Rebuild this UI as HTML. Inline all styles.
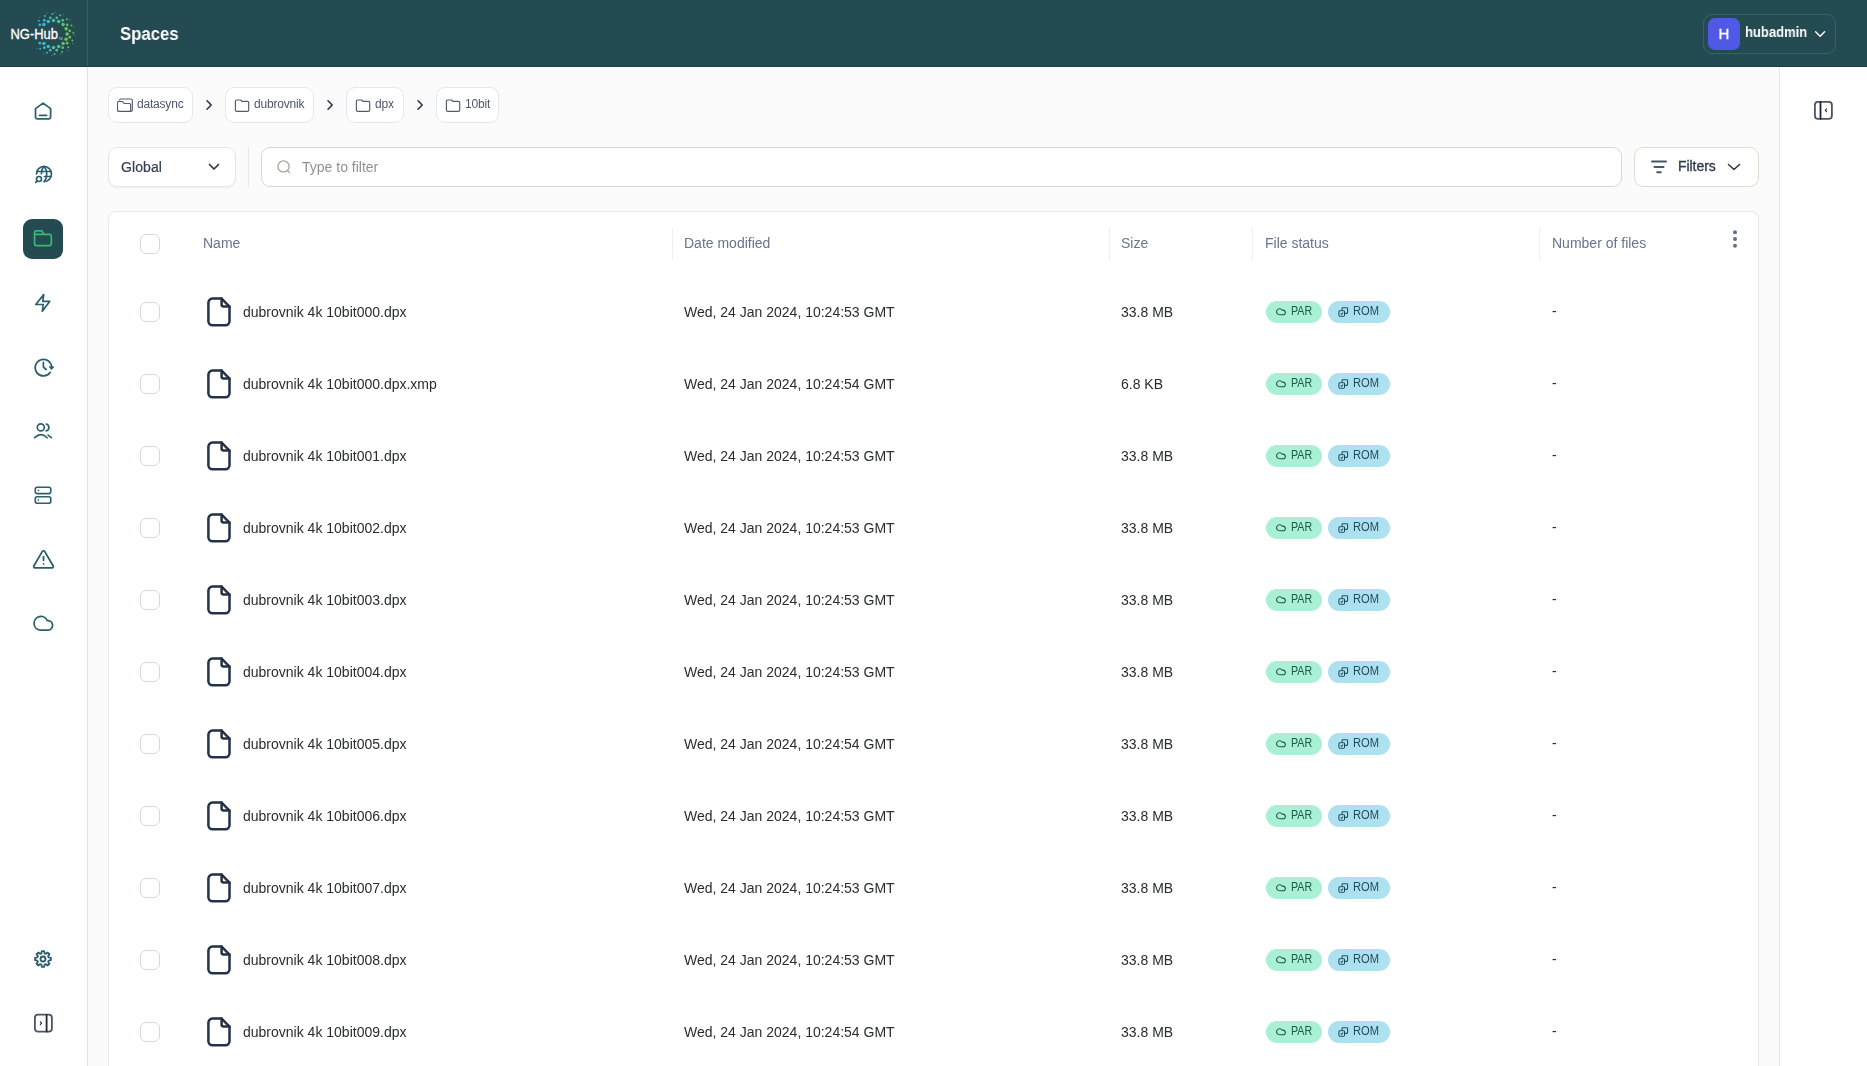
<!DOCTYPE html>
<html><head><meta charset="utf-8">
<style>
*{box-sizing:border-box;margin:0;padding:0}
html,body{width:1867px;height:1066px;overflow:hidden}
.row,.th,.ct,.ph,.ftxt,.sel,.title,.uname,.avatar,.badge{will-change:transform}
body{position:relative;background:#fbfbfc;font-family:"Liberation Sans",sans-serif;color:#1f2328}
.hdr{position:absolute;left:0;top:0;width:1867px;height:67px;background:#244a52;border-bottom:1px solid #1c3e45}
.logo{position:absolute;left:0;top:0;width:87px;height:66px}
.hsep{position:absolute;left:87px;top:0;width:1px;height:66px;background:#2f6270}
.title{position:absolute;left:120px;top:23.6px;font-size:18px;line-height:20px;font-weight:700;color:#fff;transform:scaleX(0.93);transform-origin:0 0}
.chip{position:absolute;left:1703px;top:14px;width:133px;height:40px;border:1px solid #2f6573;border-radius:9px}
.avatar{position:absolute;left:1708px;top:18px;width:32px;height:32px;border-radius:7px;background:#5059e6;color:#fff;font-size:15px;text-align:center;line-height:32px;-webkit-text-stroke:0.3px #fff}
.uname{position:absolute;left:1745px;top:23.6px;font-size:14px;line-height:16px;font-weight:700;color:#fff;transform:scaleX(0.93);transform-origin:0 0}
.side{position:absolute;left:0;top:67px;width:88px;height:999px;background:#fff;border-right:1px solid #e3e1db}
.sbi{position:absolute;left:23px}
.active{position:absolute;left:23px;top:219px;width:40px;height:40px;border-radius:9px;background:#244a52}
.rpanel{position:absolute;left:1779px;top:67px;width:88px;height:999px;background:#fff;border-left:1px solid #e5e7eb}
.crumb{position:absolute;top:87px;height:36px;background:#fff;border:1px solid #e6e8ee;border-radius:9px}
.ct{position:absolute;top:97px;font-size:12px;color:#4d586c;line-height:14px;letter-spacing:-0.2px}
.sel{position:absolute;left:108px;top:147px;width:128px;height:40px;background:#fff;border:1px solid #e5e7eb;border-radius:9px;box-shadow:0 1px 2px rgba(16,24,40,.06)}
.sel .lbl{position:absolute;left:12px;top:10.5px;font-size:14px;color:#354055;line-height:16px;-webkit-text-stroke:0.2px #354055;letter-spacing:0.1px}
.vsep{position:absolute;left:248px;top:147px;width:1px;height:40px;background:#e5e7eb}
.search{position:absolute;left:261px;top:147px;width:1361px;height:40px;background:#fff;border:1px solid #d9d8cc;border-radius:9px}
.ph{position:absolute;left:302px;top:159px;font-size:14px;color:#919191;line-height:16px}
.filters{position:absolute;left:1634px;top:147px;width:125px;height:40px;background:#fff;border:1px solid #dedcd2;border-radius:9px}
.ftxt{position:absolute;left:1678px;top:158px;font-size:14px;color:#2d3748;line-height:16px;letter-spacing:-0.05px;-webkit-text-stroke:0.3px #2d3748}
.card{position:absolute;left:108px;top:211px;width:1651px;height:900px;background:#fff;border:1px solid #e6e8ee;border-radius:8px}
.th{position:absolute;top:235px;font-size:14px;color:#66758c;line-height:16px}
.cdiv{position:absolute;top:228px;width:1px;height:32px;background:#eef0f3}
.cb{position:absolute;width:20px;height:20px;border:1px solid #d3d8e0;border-radius:6px;background:#fff}
.row{position:absolute;left:0;width:1779px;height:72px}
.row .t{position:absolute;top:28px;font-size:14px;line-height:16px;color:#2a2c30;white-space:nowrap}
.badge{position:absolute;top:25px;height:22px;border-radius:11px;font-size:12px;line-height:22px;white-space:nowrap}
.badge svg{position:absolute}
.badge span{position:absolute;top:-1.3px;transform:scaleX(0.89);transform-origin:0 0}
.par{width:56px;background:#aaf0d5;color:#1f5a4a}
.par svg{left:10px;top:5.6px}
.par span{left:24.5px}
.rom{width:62px;background:#aee1f0;color:#1e4d5c}
.rom svg{left:9.6px;top:6px}
.rom span{left:25px;transform:scaleX(0.93)}
</style></head><body>
<div class="hdr"></div>
<svg class="logo" width="87" height="66" viewBox="0 0 87 66">
<circle cx="43.9" cy="24.4" r="1.75" fill="rgb(58, 182, 210)" opacity="1.0"/><circle cx="48.3" cy="21.4" r="1.75" fill="rgb(68, 185, 186)" opacity="1.0"/><circle cx="53.5" cy="20.4" r="1.75" fill="rgb(78, 187, 162)" opacity="1.0"/><circle cx="58.7" cy="21.4" r="1.75" fill="rgb(88, 190, 138)" opacity="1.0"/><circle cx="63.1" cy="24.4" r="1.75" fill="rgb(98, 192, 114)" opacity="1.0"/><circle cx="66.1" cy="28.8" r="1.75" fill="rgb(108, 195, 90)" opacity="1.0"/><circle cx="67.1" cy="34.0" r="1.75" fill="rgb(118, 198, 66)" opacity="1.0"/><circle cx="66.1" cy="39.2" r="1.75" fill="rgb(108, 195, 90)" opacity="1.0"/><circle cx="63.1" cy="43.6" r="1.75" fill="rgb(98, 192, 114)" opacity="1.0"/><circle cx="58.7" cy="46.6" r="1.75" fill="rgb(88, 190, 138)" opacity="1.0"/><circle cx="53.5" cy="47.6" r="1.75" fill="rgb(78, 187, 162)" opacity="1.0"/><circle cx="48.3" cy="46.6" r="1.75" fill="rgb(68, 185, 186)" opacity="1.0"/><circle cx="43.9" cy="43.6" r="1.75" fill="rgb(58, 182, 210)" opacity="1.0"/><circle cx="39.8" cy="24.8" r="1.35" fill="rgb(56, 182, 216)" opacity="1.0"/><circle cx="44.3" cy="20.3" r="1.35" fill="rgb(63, 183, 198)" opacity="1.0"/><circle cx="50.3" cy="17.8" r="1.35" fill="rgb(73, 186, 174)" opacity="1.0"/><circle cx="56.7" cy="17.8" r="1.35" fill="rgb(83, 189, 150)" opacity="1.0"/><circle cx="62.7" cy="20.3" r="1.35" fill="rgb(93, 191, 126)" opacity="1.0"/><circle cx="67.2" cy="24.8" r="1.35" fill="rgb(103, 194, 102)" opacity="1.0"/><circle cx="69.7" cy="30.8" r="1.35" fill="rgb(113, 196, 78)" opacity="1.0"/><circle cx="69.7" cy="37.2" r="1.35" fill="rgb(113, 196, 78)" opacity="1.0"/><circle cx="67.2" cy="43.2" r="1.35" fill="rgb(103, 194, 102)" opacity="1.0"/><circle cx="62.7" cy="47.7" r="1.35" fill="rgb(93, 191, 126)" opacity="1.0"/><circle cx="56.7" cy="50.2" r="1.35" fill="rgb(83, 189, 150)" opacity="1.0"/><circle cx="50.3" cy="50.2" r="1.35" fill="rgb(73, 186, 174)" opacity="1.0"/><circle cx="44.3" cy="47.7" r="1.35" fill="rgb(63, 183, 198)" opacity="1.0"/><circle cx="39.8" cy="43.2" r="1.35" fill="rgb(56, 182, 216)" opacity="1.0"/><circle cx="38.7" cy="20.7" r="1.00" fill="rgb(56, 182, 213)" opacity="0.95"/><circle cx="44.9" cy="16.0" r="1.00" fill="rgb(66, 184, 189)" opacity="0.95"/><circle cx="52.5" cy="14.1" r="1.00" fill="rgb(76, 187, 165)" opacity="0.95"/><circle cx="60.1" cy="15.2" r="1.00" fill="rgb(86, 189, 141)" opacity="0.95"/><circle cx="66.8" cy="19.2" r="1.00" fill="rgb(96, 192, 117)" opacity="0.95"/><circle cx="71.5" cy="25.4" r="1.00" fill="rgb(106, 195, 93)" opacity="0.95"/><circle cx="73.4" cy="33.0" r="1.00" fill="rgb(116, 197, 69)" opacity="0.95"/><circle cx="72.3" cy="40.6" r="1.00" fill="rgb(109, 195, 86)" opacity="0.95"/><circle cx="68.3" cy="47.3" r="1.00" fill="rgb(99, 193, 111)" opacity="0.95"/><circle cx="62.1" cy="52.0" r="1.00" fill="rgb(89, 190, 135)" opacity="0.95"/><circle cx="54.5" cy="53.9" r="1.00" fill="rgb(79, 188, 159)" opacity="0.95"/><circle cx="46.9" cy="52.8" r="1.00" fill="rgb(69, 185, 183)" opacity="0.95"/><circle cx="40.2" cy="48.8" r="1.00" fill="rgb(59, 182, 207)" opacity="0.95"/><circle cx="39.2" cy="17.5" r="0.60" fill="rgb(59, 183, 206)" opacity="0.7"/><circle cx="46.6" cy="13.3" r="0.60" fill="rgb(69, 185, 182)" opacity="0.7"/><circle cx="55.0" cy="12.3" r="0.60" fill="rgb(79, 188, 158)" opacity="0.7"/><circle cx="63.2" cy="14.5" r="0.60" fill="rgb(89, 190, 134)" opacity="0.7"/><circle cx="70.0" cy="19.7" r="0.60" fill="rgb(99, 193, 109)" opacity="0.7"/><circle cx="74.2" cy="27.1" r="0.60" fill="rgb(109, 195, 85)" opacity="0.7"/><circle cx="75.2" cy="35.5" r="0.60" fill="rgb(116, 197, 70)" opacity="0.7"/><circle cx="73.0" cy="43.7" r="0.60" fill="rgb(106, 194, 94)" opacity="0.7"/><circle cx="67.8" cy="50.5" r="0.60" fill="rgb(96, 192, 118)" opacity="0.7"/><circle cx="60.4" cy="54.7" r="0.60" fill="rgb(86, 189, 142)" opacity="0.7"/><circle cx="52.0" cy="55.7" r="0.60" fill="rgb(76, 187, 166)" opacity="0.7"/><circle cx="43.8" cy="53.5" r="0.60" fill="rgb(66, 184, 190)" opacity="0.7"/><circle cx="37.0" cy="48.3" r="0.60" fill="rgb(56, 182, 214)" opacity="0.7"/>
<text x="10.5" y="39" font-family="Liberation Sans" font-size="15.5" fill="#fff" textLength="47.5" lengthAdjust="spacingAndGlyphs" stroke="#fff" stroke-width="0.35">NG-Hub</text>
<text x="58.6" y="39.9" font-family="Liberation Sans" font-size="2.6" fill="#fff" opacity="0.75">TM</text>
</svg>
<div class="hsep"></div>
<div class="title">Spaces</div>
<div class="chip"></div>
<div class="avatar">H</div>
<div class="uname">hubadmin</div>
<svg style="position:absolute;left:1812px;top:28px" width="16" height="12" viewBox="0 0 16 12" fill="none" stroke="#fff" stroke-width="1.4" stroke-linecap="round" stroke-linejoin="round"><path d="M3.6 3.8 L8.1 8.3 L12.6 3.8"/></svg>

<div class="side"></div>
<svg class="sbi" style="top:90.6px" width="40" height="40" viewBox="0 0 40 40" fill="none" stroke="#2a5f6b" stroke-width="1.75" stroke-linecap="round" stroke-linejoin="round"><path d="M20.1 12.1 L27.6 17.6 V26.1 a1.8 1.8 0 0 1 -1.8 1.8 H14.3 a1.8 1.8 0 0 1 -1.8 -1.8 V17.6 Z"/><path d="M16.5 24.3 H23.6"/></svg>
<svg style="position:absolute;left:34px;top:163.8px" width="20" height="20" viewBox="0 0 24 24" fill="none" stroke="#2a5f6b" stroke-width="2" stroke-linecap="round" stroke-linejoin="round"><path d="M3 12a9 9 0 1 1 9 9"/><path d="M3.6 9h16.8"/><path d="M12.5 15h7.9"/><path d="M12.5 3a17 17 0 0 1 0 18"/><path d="M11.5 3a16.984 16.984 0 0 0 -2.574 8.62"/><circle cx="6" cy="18" r="3"/><path d="M3.8 20.2l-1.8 1.8"/></svg>
<div class="active"></div><svg class="sbi" style="top:218.2px" width="40" height="40" viewBox="0 0 40 40" fill="none" stroke="#37b875" stroke-width="1.7" stroke-linecap="round" stroke-linejoin="round"><path d="M11.6 16.3 V14.6 a1.7 1.7 0 0 1 1.7 -1.7 H18.9 L20.9 16.3"/><path d="M11.6 16.3 H26.3 a2 2 0 0 1 2 2 V25.6 a2 2 0 0 1 -2 2 H13.6 a2 2 0 0 1 -2 -2 Z"/></svg>
<svg class="sbi" style="top:283px" width="40" height="40" viewBox="0 0 40 40" fill="none" stroke="#2a5f6b" stroke-width="1.7" stroke-linecap="round" stroke-linejoin="round"><path d="M20.7 11.6 L19.8 18.3 H26.8 L19.3 28.2 L20.2 21.5 H12.8 Z"/></svg>
<svg class="sbi" style="top:346.7px" width="40" height="40" viewBox="0 0 40 40" fill="none" stroke="#2a5f6b" stroke-width="1.7" stroke-linecap="round" stroke-linejoin="round"><path transform="translate(0.4 0)" d="M28.3 19.8 A8.3 8.3 0 1 0 26.9 25.3"/><path transform="translate(0.4 0)" d="M26.2 19.8 L30.2 20 L28.1 22.1 Z" fill="#2a5f6b" stroke-width="1.2"/><path transform="translate(0.4 0)" d="M20 15.4 V20.1 L22.8 22.5"/></svg>
<svg class="sbi" style="top:409.8px" width="40" height="40" viewBox="0 0 40 40" fill="none" stroke="#2a5f6b" stroke-width="1.65" stroke-linecap="round" stroke-linejoin="round"><circle cx="17.8" cy="17.4" r="3.5"/><path d="M23.3 14 A3.6 3.6 0 0 1 23.3 20.9"/><path d="M11.6 27.7 Q18.3 21.4 24.1 27.8"/><path d="M25.1 25.1 L28.4 27.7"/></svg>
<svg class="sbi" style="top:475px" width="40" height="40" viewBox="0 0 40 40" fill="none" stroke="#2a5f6b" stroke-width="1.6" stroke-linecap="round" stroke-linejoin="round"><rect x="12.3" y="12.3" width="15.5" height="6.3" rx="2"/><rect x="12.3" y="21.8" width="15.5" height="6.4" rx="2"/><path d="M15.4 15.4 h0.01"/><path d="M15.4 24.9 h0.01"/></svg>
<svg class="sbi" style="top:539px" width="40" height="40" viewBox="0 0 40 40" fill="none" stroke="#2a5f6b" stroke-width="1.8" stroke-linecap="round" stroke-linejoin="round"><path d="M19.2 12.6 a1.5 1.5 0 0 1 2.6 0 L30.2 27 a1.3 1.3 0 0 1 -1.1 1.8 H11.9 a1.3 1.3 0 0 1 -1.1 -1.8 Z"/><path d="M20.5 17.6 V21.3"/><path d="M20.5 24.9 h0.01"/></svg>
<svg class="sbi" style="top:603.8px" width="40" height="40" viewBox="0 0 40 40" fill="none" stroke="#2a5f6b" stroke-width="1.75" stroke-linecap="round" stroke-linejoin="round"><path d="M17.2 26.2 A6.9 6.9 0 1 1 24.3 16.6 A4.8 4.8 0 0 1 25.2 26.2 Z"/></svg>
<svg class="sbi" style="top:938.9px" width="40" height="40" viewBox="0 0 40 40" fill="none" stroke="#2a5f6b" stroke-width="1.85" stroke-linecap="round" stroke-linejoin="round"><path d="M18.42 14.31 L18.82 12.09 L21.18 12.09 L21.58 14.31 L22.91 14.86 L24.76 13.57 L26.43 15.24 L25.14 17.09 L25.69 18.42 L27.91 18.82 L27.91 21.18 L25.69 21.58 L25.14 22.91 L26.43 24.76 L24.76 26.43 L22.91 25.14 L21.58 25.69 L21.18 27.91 L18.82 27.91 L18.42 25.69 L17.09 25.14 L15.24 26.43 L13.57 24.76 L14.86 22.91 L14.31 21.58 L12.09 21.18 L12.09 18.82 L14.31 18.42 L14.86 17.09 L13.57 15.24 L15.24 13.57 L17.09 14.86 Z"/><circle cx="20" cy="20" r="2.5"/></svg>
<svg class="sbi" style="top:1003.3px" width="40" height="40" viewBox="0 0 40 40" fill="none" stroke="#4b5563" stroke-width="1.8" stroke-linecap="round" stroke-linejoin="round"><rect x="11.9" y="11.7" width="17" height="17" rx="3.2" stroke="#4b5563"/><path d="M23.6 11.8 V28.6" stroke="#1f2937"/><path d="M17.3 18.8 L18.6 20.2 L17.3 21.6" stroke="#1f2937" stroke-width="1.1"/></svg>

<div class="rpanel"></div>
<svg style="position:absolute;left:1803px;top:90px" width="40" height="40" viewBox="0 0 40 40" fill="none" stroke-width="1.8" stroke-linecap="round" stroke-linejoin="round"><rect x="11.9" y="11.9" width="17" height="17" rx="3.2" stroke="#4b5563"/><path d="M17.5 12 V28.8" stroke="#1f2937"/><path d="M23.6 18.9 L22.3 20.3 L23.6 21.7" stroke="#1f2937" stroke-width="1.1"/></svg>

<div class="crumb" style="left:108px;width:85px"></div>
<svg style="position:absolute;left:117px;top:98px" width="16" height="15" viewBox="0 0 16 15" fill="none" stroke="#505b6f" stroke-width="1.15" stroke-linejoin="round"><path d="M2.6 2.6 V2.2 a1.2 1.2 0 0 1 1.2 -1.2 H14 a1.3 1.3 0 0 1 1.3 1.3 V12.1 a1.3 1.3 0 0 1 -1.3 1.3 H13.6"/><path d="M1.8 13.4 H13.6 V6.8 a1.3 1.3 0 0 0 -1.3 -1.3 H7.1 L5.8 3.5 H1.8 a1.3 1.3 0 0 0 -1.3 1.3 V12.1 a1.3 1.3 0 0 0 1.3 1.3 Z"/></svg>
<div class="ct" style="left:137px">datasync</div>
<div class="crumb" style="left:225px;width:89px"></div>
<svg style="position:absolute;left:234px;top:98px" width="16" height="15" viewBox="0 0 16 15" fill="none" stroke="#505b6f" stroke-width="1.15" stroke-linejoin="round"><path d="M1.4 3.3 a1.3 1.3 0 0 1 1.3 -1.3 H6.6 L7.9 3.4 H13.4 a1.3 1.3 0 0 1 1.3 1.3 V12 a1.3 1.3 0 0 1 -1.3 1.3 H2.7 a1.3 1.3 0 0 1 -1.3 -1.3 Z"/></svg>
<div class="ct" style="left:254px">dubrovnik</div>
<div class="crumb" style="left:346px;width:58px"></div>
<svg style="position:absolute;left:355px;top:98px" width="16" height="15" viewBox="0 0 16 15" fill="none" stroke="#505b6f" stroke-width="1.15" stroke-linejoin="round"><path d="M1.4 3.3 a1.3 1.3 0 0 1 1.3 -1.3 H6.6 L7.9 3.4 H13.4 a1.3 1.3 0 0 1 1.3 1.3 V12 a1.3 1.3 0 0 1 -1.3 1.3 H2.7 a1.3 1.3 0 0 1 -1.3 -1.3 Z"/></svg>
<div class="ct" style="left:375px">dpx</div>
<div class="crumb" style="left:436px;width:63px"></div>
<svg style="position:absolute;left:445px;top:98px" width="16" height="15" viewBox="0 0 16 15" fill="none" stroke="#505b6f" stroke-width="1.15" stroke-linejoin="round"><path d="M1.4 3.3 a1.3 1.3 0 0 1 1.3 -1.3 H6.6 L7.9 3.4 H13.4 a1.3 1.3 0 0 1 1.3 1.3 V12 a1.3 1.3 0 0 1 -1.3 1.3 H2.7 a1.3 1.3 0 0 1 -1.3 -1.3 Z"/></svg>
<div class="ct" style="left:465px">10bit</div>
<svg style="position:absolute;left:205px;top:99px" width="9" height="12" viewBox="0 0 9 12" fill="none" stroke="#2d3748" stroke-width="1.6" stroke-linecap="round" stroke-linejoin="round"><path d="M2 1.8 L6.2 6 L2 10.2"/></svg>
<svg style="position:absolute;left:326px;top:99px" width="9" height="12" viewBox="0 0 9 12" fill="none" stroke="#2d3748" stroke-width="1.6" stroke-linecap="round" stroke-linejoin="round"><path d="M2 1.8 L6.2 6 L2 10.2"/></svg>
<svg style="position:absolute;left:416px;top:99px" width="9" height="12" viewBox="0 0 9 12" fill="none" stroke="#2d3748" stroke-width="1.6" stroke-linecap="round" stroke-linejoin="round"><path d="M2 1.8 L6.2 6 L2 10.2"/></svg>

<div class="sel"><div class="lbl">Global</div></div>
<svg style="position:absolute;left:205px;top:159px" width="18" height="16" viewBox="0 0 18 16" fill="none" stroke="#2d3748" stroke-width="1.7" stroke-linecap="round" stroke-linejoin="round"><path d="M4.5 5.5 L9 10 L13.5 5.5"/></svg>
<div class="vsep"></div>
<div class="search"></div>
<svg style="position:absolute;left:274px;top:157px" width="20" height="20" viewBox="0 0 20 20" fill="none" stroke="#a5a592" stroke-width="1.3" stroke-linecap="round"><circle cx="9.5" cy="9.5" r="5.6"/><path d="M13.6 13.6 L15.6 15.6"/></svg>
<div class="ph">Type to filter</div>
<div class="filters"></div>
<svg style="position:absolute;left:1649px;top:157px" width="20" height="20" viewBox="0 0 20 20" fill="none" stroke="#4a5568" stroke-width="2" stroke-linecap="round"><path d="M3 4.5 H17"/><path d="M5.5 10 H14.5"/><path d="M8.2 15.3 H11.8"/></svg>
<div class="ftxt">Filters</div>
<svg style="position:absolute;left:1725px;top:159px" width="18" height="16" viewBox="0 0 18 16" fill="none" stroke="#2d3748" stroke-width="1.5" stroke-linecap="round" stroke-linejoin="round"><path d="M3.5 5.5 L9 10.5 L14.5 5.5"/></svg>

<div class="card"></div>
<div class="cb" style="left:140px;top:234px"></div>
<div class="th" style="left:203px">Name</div>
<div class="cdiv" style="left:672px"></div>
<div class="th" style="left:684px">Date modified</div>
<div class="cdiv" style="left:1109px"></div>
<div class="th" style="left:1121px">Size</div>
<div class="cdiv" style="left:1252px"></div>
<div class="th" style="left:1265px">File status</div>
<div class="cdiv" style="left:1539px"></div>
<div class="th" style="left:1552px">Number of files</div>
<svg style="position:absolute;left:1728px;top:228px" width="14" height="22" viewBox="0 0 14 22" fill="#636f85"><circle cx="7" cy="4.3" r="2"/><circle cx="7" cy="11" r="2"/><circle cx="7" cy="17.8" r="2"/></svg>

<div class="row" style="top:276px">
<div class="cb" style="left:140px;top:26px"></div>
<div style="position:absolute;left:207px;top:21px"><svg class="fi" width="24" height="30" viewBox="0 0 24 30" fill="none" stroke="#243248" stroke-width="2.5" stroke-linejoin="round" stroke-linecap="round"><path d="M14.6 1.6 H5.4 a4 4 0 0 0 -4 4 V24.2 a4 4 0 0 0 4 4 H18.5 a4 4 0 0 0 4 -4 V9.6 Z"/><path d="M14.6 1.6 V7.6 a2 2 0 0 0 2 2 H22.5"/></svg></div>
<div class="t" style="left:243px">dubrovnik 4k 10bit000.dpx</div>
<div class="t" style="left:684px">Wed, 24 Jan 2024, 10:24:53 GMT</div>
<div class="t" style="left:1121px">33.8 MB</div>
<div class="badge par" style="left:1266px"><svg width="11" height="9" viewBox="0 0 11 9" fill="none" stroke="#1f5a4a" stroke-width="1.1" stroke-linejoin="round"><path d="M3.6 7.8 A3 3 0 1 1 6.2 3.3 A2.2 2.2 0 0 1 7.8 7.8 Z"/></svg><span>PAR</span></div>
<div class="badge rom" style="left:1328px"><svg width="11" height="11" viewBox="0 0 11 11" fill="none" stroke="#1e4f5f" stroke-width="1.05" stroke-linejoin="round"><rect x="4" y="0.75" width="5.6" height="5.6" rx="0.9"/><rect x="0.9" y="3.8" width="5.6" height="5.4" rx="0.9" fill="#b6ecf8"/><path d="M2.5 6.4 L3.6 7.4 L5.1 5.5"/></svg><span>ROM</span></div>
<div class="t" style="left:1552px;top:27px">-</div>
</div>
<div class="row" style="top:348px">
<div class="cb" style="left:140px;top:26px"></div>
<div style="position:absolute;left:207px;top:21px"><svg class="fi" width="24" height="30" viewBox="0 0 24 30" fill="none" stroke="#243248" stroke-width="2.5" stroke-linejoin="round" stroke-linecap="round"><path d="M14.6 1.6 H5.4 a4 4 0 0 0 -4 4 V24.2 a4 4 0 0 0 4 4 H18.5 a4 4 0 0 0 4 -4 V9.6 Z"/><path d="M14.6 1.6 V7.6 a2 2 0 0 0 2 2 H22.5"/></svg></div>
<div class="t" style="left:243px">dubrovnik 4k 10bit000.dpx.xmp</div>
<div class="t" style="left:684px">Wed, 24 Jan 2024, 10:24:54 GMT</div>
<div class="t" style="left:1121px">6.8 KB</div>
<div class="badge par" style="left:1266px"><svg width="11" height="9" viewBox="0 0 11 9" fill="none" stroke="#1f5a4a" stroke-width="1.1" stroke-linejoin="round"><path d="M3.6 7.8 A3 3 0 1 1 6.2 3.3 A2.2 2.2 0 0 1 7.8 7.8 Z"/></svg><span>PAR</span></div>
<div class="badge rom" style="left:1328px"><svg width="11" height="11" viewBox="0 0 11 11" fill="none" stroke="#1e4f5f" stroke-width="1.05" stroke-linejoin="round"><rect x="4" y="0.75" width="5.6" height="5.6" rx="0.9"/><rect x="0.9" y="3.8" width="5.6" height="5.4" rx="0.9" fill="#b6ecf8"/><path d="M2.5 6.4 L3.6 7.4 L5.1 5.5"/></svg><span>ROM</span></div>
<div class="t" style="left:1552px;top:27px">-</div>
</div>
<div class="row" style="top:420px">
<div class="cb" style="left:140px;top:26px"></div>
<div style="position:absolute;left:207px;top:21px"><svg class="fi" width="24" height="30" viewBox="0 0 24 30" fill="none" stroke="#243248" stroke-width="2.5" stroke-linejoin="round" stroke-linecap="round"><path d="M14.6 1.6 H5.4 a4 4 0 0 0 -4 4 V24.2 a4 4 0 0 0 4 4 H18.5 a4 4 0 0 0 4 -4 V9.6 Z"/><path d="M14.6 1.6 V7.6 a2 2 0 0 0 2 2 H22.5"/></svg></div>
<div class="t" style="left:243px">dubrovnik 4k 10bit001.dpx</div>
<div class="t" style="left:684px">Wed, 24 Jan 2024, 10:24:53 GMT</div>
<div class="t" style="left:1121px">33.8 MB</div>
<div class="badge par" style="left:1266px"><svg width="11" height="9" viewBox="0 0 11 9" fill="none" stroke="#1f5a4a" stroke-width="1.1" stroke-linejoin="round"><path d="M3.6 7.8 A3 3 0 1 1 6.2 3.3 A2.2 2.2 0 0 1 7.8 7.8 Z"/></svg><span>PAR</span></div>
<div class="badge rom" style="left:1328px"><svg width="11" height="11" viewBox="0 0 11 11" fill="none" stroke="#1e4f5f" stroke-width="1.05" stroke-linejoin="round"><rect x="4" y="0.75" width="5.6" height="5.6" rx="0.9"/><rect x="0.9" y="3.8" width="5.6" height="5.4" rx="0.9" fill="#b6ecf8"/><path d="M2.5 6.4 L3.6 7.4 L5.1 5.5"/></svg><span>ROM</span></div>
<div class="t" style="left:1552px;top:27px">-</div>
</div>
<div class="row" style="top:492px">
<div class="cb" style="left:140px;top:26px"></div>
<div style="position:absolute;left:207px;top:21px"><svg class="fi" width="24" height="30" viewBox="0 0 24 30" fill="none" stroke="#243248" stroke-width="2.5" stroke-linejoin="round" stroke-linecap="round"><path d="M14.6 1.6 H5.4 a4 4 0 0 0 -4 4 V24.2 a4 4 0 0 0 4 4 H18.5 a4 4 0 0 0 4 -4 V9.6 Z"/><path d="M14.6 1.6 V7.6 a2 2 0 0 0 2 2 H22.5"/></svg></div>
<div class="t" style="left:243px">dubrovnik 4k 10bit002.dpx</div>
<div class="t" style="left:684px">Wed, 24 Jan 2024, 10:24:53 GMT</div>
<div class="t" style="left:1121px">33.8 MB</div>
<div class="badge par" style="left:1266px"><svg width="11" height="9" viewBox="0 0 11 9" fill="none" stroke="#1f5a4a" stroke-width="1.1" stroke-linejoin="round"><path d="M3.6 7.8 A3 3 0 1 1 6.2 3.3 A2.2 2.2 0 0 1 7.8 7.8 Z"/></svg><span>PAR</span></div>
<div class="badge rom" style="left:1328px"><svg width="11" height="11" viewBox="0 0 11 11" fill="none" stroke="#1e4f5f" stroke-width="1.05" stroke-linejoin="round"><rect x="4" y="0.75" width="5.6" height="5.6" rx="0.9"/><rect x="0.9" y="3.8" width="5.6" height="5.4" rx="0.9" fill="#b6ecf8"/><path d="M2.5 6.4 L3.6 7.4 L5.1 5.5"/></svg><span>ROM</span></div>
<div class="t" style="left:1552px;top:27px">-</div>
</div>
<div class="row" style="top:564px">
<div class="cb" style="left:140px;top:26px"></div>
<div style="position:absolute;left:207px;top:21px"><svg class="fi" width="24" height="30" viewBox="0 0 24 30" fill="none" stroke="#243248" stroke-width="2.5" stroke-linejoin="round" stroke-linecap="round"><path d="M14.6 1.6 H5.4 a4 4 0 0 0 -4 4 V24.2 a4 4 0 0 0 4 4 H18.5 a4 4 0 0 0 4 -4 V9.6 Z"/><path d="M14.6 1.6 V7.6 a2 2 0 0 0 2 2 H22.5"/></svg></div>
<div class="t" style="left:243px">dubrovnik 4k 10bit003.dpx</div>
<div class="t" style="left:684px">Wed, 24 Jan 2024, 10:24:53 GMT</div>
<div class="t" style="left:1121px">33.8 MB</div>
<div class="badge par" style="left:1266px"><svg width="11" height="9" viewBox="0 0 11 9" fill="none" stroke="#1f5a4a" stroke-width="1.1" stroke-linejoin="round"><path d="M3.6 7.8 A3 3 0 1 1 6.2 3.3 A2.2 2.2 0 0 1 7.8 7.8 Z"/></svg><span>PAR</span></div>
<div class="badge rom" style="left:1328px"><svg width="11" height="11" viewBox="0 0 11 11" fill="none" stroke="#1e4f5f" stroke-width="1.05" stroke-linejoin="round"><rect x="4" y="0.75" width="5.6" height="5.6" rx="0.9"/><rect x="0.9" y="3.8" width="5.6" height="5.4" rx="0.9" fill="#b6ecf8"/><path d="M2.5 6.4 L3.6 7.4 L5.1 5.5"/></svg><span>ROM</span></div>
<div class="t" style="left:1552px;top:27px">-</div>
</div>
<div class="row" style="top:636px">
<div class="cb" style="left:140px;top:26px"></div>
<div style="position:absolute;left:207px;top:21px"><svg class="fi" width="24" height="30" viewBox="0 0 24 30" fill="none" stroke="#243248" stroke-width="2.5" stroke-linejoin="round" stroke-linecap="round"><path d="M14.6 1.6 H5.4 a4 4 0 0 0 -4 4 V24.2 a4 4 0 0 0 4 4 H18.5 a4 4 0 0 0 4 -4 V9.6 Z"/><path d="M14.6 1.6 V7.6 a2 2 0 0 0 2 2 H22.5"/></svg></div>
<div class="t" style="left:243px">dubrovnik 4k 10bit004.dpx</div>
<div class="t" style="left:684px">Wed, 24 Jan 2024, 10:24:53 GMT</div>
<div class="t" style="left:1121px">33.8 MB</div>
<div class="badge par" style="left:1266px"><svg width="11" height="9" viewBox="0 0 11 9" fill="none" stroke="#1f5a4a" stroke-width="1.1" stroke-linejoin="round"><path d="M3.6 7.8 A3 3 0 1 1 6.2 3.3 A2.2 2.2 0 0 1 7.8 7.8 Z"/></svg><span>PAR</span></div>
<div class="badge rom" style="left:1328px"><svg width="11" height="11" viewBox="0 0 11 11" fill="none" stroke="#1e4f5f" stroke-width="1.05" stroke-linejoin="round"><rect x="4" y="0.75" width="5.6" height="5.6" rx="0.9"/><rect x="0.9" y="3.8" width="5.6" height="5.4" rx="0.9" fill="#b6ecf8"/><path d="M2.5 6.4 L3.6 7.4 L5.1 5.5"/></svg><span>ROM</span></div>
<div class="t" style="left:1552px;top:27px">-</div>
</div>
<div class="row" style="top:708px">
<div class="cb" style="left:140px;top:26px"></div>
<div style="position:absolute;left:207px;top:21px"><svg class="fi" width="24" height="30" viewBox="0 0 24 30" fill="none" stroke="#243248" stroke-width="2.5" stroke-linejoin="round" stroke-linecap="round"><path d="M14.6 1.6 H5.4 a4 4 0 0 0 -4 4 V24.2 a4 4 0 0 0 4 4 H18.5 a4 4 0 0 0 4 -4 V9.6 Z"/><path d="M14.6 1.6 V7.6 a2 2 0 0 0 2 2 H22.5"/></svg></div>
<div class="t" style="left:243px">dubrovnik 4k 10bit005.dpx</div>
<div class="t" style="left:684px">Wed, 24 Jan 2024, 10:24:54 GMT</div>
<div class="t" style="left:1121px">33.8 MB</div>
<div class="badge par" style="left:1266px"><svg width="11" height="9" viewBox="0 0 11 9" fill="none" stroke="#1f5a4a" stroke-width="1.1" stroke-linejoin="round"><path d="M3.6 7.8 A3 3 0 1 1 6.2 3.3 A2.2 2.2 0 0 1 7.8 7.8 Z"/></svg><span>PAR</span></div>
<div class="badge rom" style="left:1328px"><svg width="11" height="11" viewBox="0 0 11 11" fill="none" stroke="#1e4f5f" stroke-width="1.05" stroke-linejoin="round"><rect x="4" y="0.75" width="5.6" height="5.6" rx="0.9"/><rect x="0.9" y="3.8" width="5.6" height="5.4" rx="0.9" fill="#b6ecf8"/><path d="M2.5 6.4 L3.6 7.4 L5.1 5.5"/></svg><span>ROM</span></div>
<div class="t" style="left:1552px;top:27px">-</div>
</div>
<div class="row" style="top:780px">
<div class="cb" style="left:140px;top:26px"></div>
<div style="position:absolute;left:207px;top:21px"><svg class="fi" width="24" height="30" viewBox="0 0 24 30" fill="none" stroke="#243248" stroke-width="2.5" stroke-linejoin="round" stroke-linecap="round"><path d="M14.6 1.6 H5.4 a4 4 0 0 0 -4 4 V24.2 a4 4 0 0 0 4 4 H18.5 a4 4 0 0 0 4 -4 V9.6 Z"/><path d="M14.6 1.6 V7.6 a2 2 0 0 0 2 2 H22.5"/></svg></div>
<div class="t" style="left:243px">dubrovnik 4k 10bit006.dpx</div>
<div class="t" style="left:684px">Wed, 24 Jan 2024, 10:24:53 GMT</div>
<div class="t" style="left:1121px">33.8 MB</div>
<div class="badge par" style="left:1266px"><svg width="11" height="9" viewBox="0 0 11 9" fill="none" stroke="#1f5a4a" stroke-width="1.1" stroke-linejoin="round"><path d="M3.6 7.8 A3 3 0 1 1 6.2 3.3 A2.2 2.2 0 0 1 7.8 7.8 Z"/></svg><span>PAR</span></div>
<div class="badge rom" style="left:1328px"><svg width="11" height="11" viewBox="0 0 11 11" fill="none" stroke="#1e4f5f" stroke-width="1.05" stroke-linejoin="round"><rect x="4" y="0.75" width="5.6" height="5.6" rx="0.9"/><rect x="0.9" y="3.8" width="5.6" height="5.4" rx="0.9" fill="#b6ecf8"/><path d="M2.5 6.4 L3.6 7.4 L5.1 5.5"/></svg><span>ROM</span></div>
<div class="t" style="left:1552px;top:27px">-</div>
</div>
<div class="row" style="top:852px">
<div class="cb" style="left:140px;top:26px"></div>
<div style="position:absolute;left:207px;top:21px"><svg class="fi" width="24" height="30" viewBox="0 0 24 30" fill="none" stroke="#243248" stroke-width="2.5" stroke-linejoin="round" stroke-linecap="round"><path d="M14.6 1.6 H5.4 a4 4 0 0 0 -4 4 V24.2 a4 4 0 0 0 4 4 H18.5 a4 4 0 0 0 4 -4 V9.6 Z"/><path d="M14.6 1.6 V7.6 a2 2 0 0 0 2 2 H22.5"/></svg></div>
<div class="t" style="left:243px">dubrovnik 4k 10bit007.dpx</div>
<div class="t" style="left:684px">Wed, 24 Jan 2024, 10:24:53 GMT</div>
<div class="t" style="left:1121px">33.8 MB</div>
<div class="badge par" style="left:1266px"><svg width="11" height="9" viewBox="0 0 11 9" fill="none" stroke="#1f5a4a" stroke-width="1.1" stroke-linejoin="round"><path d="M3.6 7.8 A3 3 0 1 1 6.2 3.3 A2.2 2.2 0 0 1 7.8 7.8 Z"/></svg><span>PAR</span></div>
<div class="badge rom" style="left:1328px"><svg width="11" height="11" viewBox="0 0 11 11" fill="none" stroke="#1e4f5f" stroke-width="1.05" stroke-linejoin="round"><rect x="4" y="0.75" width="5.6" height="5.6" rx="0.9"/><rect x="0.9" y="3.8" width="5.6" height="5.4" rx="0.9" fill="#b6ecf8"/><path d="M2.5 6.4 L3.6 7.4 L5.1 5.5"/></svg><span>ROM</span></div>
<div class="t" style="left:1552px;top:27px">-</div>
</div>
<div class="row" style="top:924px">
<div class="cb" style="left:140px;top:26px"></div>
<div style="position:absolute;left:207px;top:21px"><svg class="fi" width="24" height="30" viewBox="0 0 24 30" fill="none" stroke="#243248" stroke-width="2.5" stroke-linejoin="round" stroke-linecap="round"><path d="M14.6 1.6 H5.4 a4 4 0 0 0 -4 4 V24.2 a4 4 0 0 0 4 4 H18.5 a4 4 0 0 0 4 -4 V9.6 Z"/><path d="M14.6 1.6 V7.6 a2 2 0 0 0 2 2 H22.5"/></svg></div>
<div class="t" style="left:243px">dubrovnik 4k 10bit008.dpx</div>
<div class="t" style="left:684px">Wed, 24 Jan 2024, 10:24:53 GMT</div>
<div class="t" style="left:1121px">33.8 MB</div>
<div class="badge par" style="left:1266px"><svg width="11" height="9" viewBox="0 0 11 9" fill="none" stroke="#1f5a4a" stroke-width="1.1" stroke-linejoin="round"><path d="M3.6 7.8 A3 3 0 1 1 6.2 3.3 A2.2 2.2 0 0 1 7.8 7.8 Z"/></svg><span>PAR</span></div>
<div class="badge rom" style="left:1328px"><svg width="11" height="11" viewBox="0 0 11 11" fill="none" stroke="#1e4f5f" stroke-width="1.05" stroke-linejoin="round"><rect x="4" y="0.75" width="5.6" height="5.6" rx="0.9"/><rect x="0.9" y="3.8" width="5.6" height="5.4" rx="0.9" fill="#b6ecf8"/><path d="M2.5 6.4 L3.6 7.4 L5.1 5.5"/></svg><span>ROM</span></div>
<div class="t" style="left:1552px;top:27px">-</div>
</div>
<div class="row" style="top:996px">
<div class="cb" style="left:140px;top:26px"></div>
<div style="position:absolute;left:207px;top:21px"><svg class="fi" width="24" height="30" viewBox="0 0 24 30" fill="none" stroke="#243248" stroke-width="2.5" stroke-linejoin="round" stroke-linecap="round"><path d="M14.6 1.6 H5.4 a4 4 0 0 0 -4 4 V24.2 a4 4 0 0 0 4 4 H18.5 a4 4 0 0 0 4 -4 V9.6 Z"/><path d="M14.6 1.6 V7.6 a2 2 0 0 0 2 2 H22.5"/></svg></div>
<div class="t" style="left:243px">dubrovnik 4k 10bit009.dpx</div>
<div class="t" style="left:684px">Wed, 24 Jan 2024, 10:24:54 GMT</div>
<div class="t" style="left:1121px">33.8 MB</div>
<div class="badge par" style="left:1266px"><svg width="11" height="9" viewBox="0 0 11 9" fill="none" stroke="#1f5a4a" stroke-width="1.1" stroke-linejoin="round"><path d="M3.6 7.8 A3 3 0 1 1 6.2 3.3 A2.2 2.2 0 0 1 7.8 7.8 Z"/></svg><span>PAR</span></div>
<div class="badge rom" style="left:1328px"><svg width="11" height="11" viewBox="0 0 11 11" fill="none" stroke="#1e4f5f" stroke-width="1.05" stroke-linejoin="round"><rect x="4" y="0.75" width="5.6" height="5.6" rx="0.9"/><rect x="0.9" y="3.8" width="5.6" height="5.4" rx="0.9" fill="#b6ecf8"/><path d="M2.5 6.4 L3.6 7.4 L5.1 5.5"/></svg><span>ROM</span></div>
<div class="t" style="left:1552px;top:27px">-</div>
</div>
</body></html>
